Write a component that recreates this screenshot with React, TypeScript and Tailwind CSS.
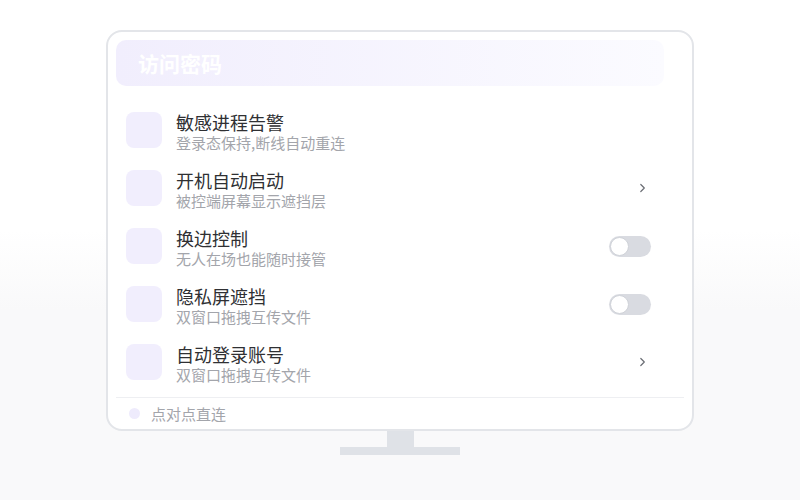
type Row = {
  title: string;
  desc: string;
  action: "none" | "arrow" | "toggle";
};

const rows: Row[] = [
  { title: "敏感进程告警", desc: "登录态保持,断线自动重连", action: "none" },
  { title: "开机自动启动", desc: "被控端屏幕显示遮挡层", action: "arrow" },
  { title: "换边控制", desc: "无人在场也能随时接管", action: "toggle" },
  { title: "隐私屏遮挡", desc: "双窗口拖拽互传文件", action: "toggle" },
  { title: "自动登录账号", desc: "双窗口拖拽互传文件", action: "arrow" },
];

function Toggle() {
  return (
    <div className="flex h-[21px] w-[42px] items-center rounded-full bg-[#d9dbe1] px-[1px]">
      <div className="h-[19px] w-[19px] rounded-full border border-[#cfd2d8] bg-white" />
    </div>
  );
}

function Chevron() {
  return (
    <svg width="7" height="10" viewBox="0 0 7 10" fill="none">
      <path d="M1.8 1.5L5.3 5L1.8 8.5" stroke="#6b6e75" strokeWidth="1.2" strokeLinecap="round" strokeLinejoin="round" />
    </svg>
  );
}

function SettingRow({ row }: { row: Row }) {
  return (
    <div className="flex h-[58px] items-center pl-[10px] pr-[33px]">
      <div className="h-[36px] w-[36px] shrink-0 rounded-[8px] bg-[#f1eefd]" />
      <div className="ml-[14px] flex flex-1 flex-col self-start pt-[10px]">
        <span className="text-[18px] leading-[22px] text-[#2f3033]">{row.title}</span>
        <span className="text-[15px] leading-[20px] text-[#a3a5ab]">{row.desc}</span>
      </div>
      <div className="flex w-[42px] justify-end">
        {row.action === "toggle" && <Toggle />}
        {row.action === "arrow" && (
          <div className="pr-[5px]">
            <Chevron />
          </div>
        )}
      </div>
    </div>
  );
}

export default function App() {
  return (
    <div
      className="flex h-[500px] w-[800px] flex-col items-center bg-[linear-gradient(to_bottom,#ffffff_0%,#ffffff_46%,#f9f9fa_62%,#f9f9fa_100%)] pt-[30px]"
      style={{ fontFamily: '"Noto Sans CJK SC", "Noto Sans", sans-serif' }}
    >
      {/* Monitor screen */}
      <div className="flex h-[401px] w-[588px] flex-col rounded-[16px] border-2 border-[#e3e5e9] bg-white px-[8px] pt-[8px]">
        <div className="flex h-[46px] w-[548px] items-center rounded-[10px] bg-gradient-to-r from-[#f1eefd] to-[#fbfbff] pl-[22px]">
          <span className="text-[21px] font-bold leading-[24px] text-white">访问密码</span>
        </div>

        <div className="mt-[15px] flex flex-col">
          {rows.map((row) => (
            <SettingRow key={row.title} row={row} />
          ))}
        </div>

        <div className="mt-[6px] h-px bg-[#eeeff2]" />

        <div className="flex h-[31px] items-center pl-[13px]">
          <div className="h-[11px] w-[11px] rounded-full bg-[#eeebfc]" />
          <span className="ml-[11px] text-[15px] leading-[18px] text-[#a3a5ab]">点对点直连</span>
        </div>
      </div>

      {/* Stand */}
      <div className="h-[16px] w-[27px] bg-[#dfe2e7]" />
      <div className="h-[8px] w-[120px] bg-[#dfe2e7]" />
    </div>
  );
}
